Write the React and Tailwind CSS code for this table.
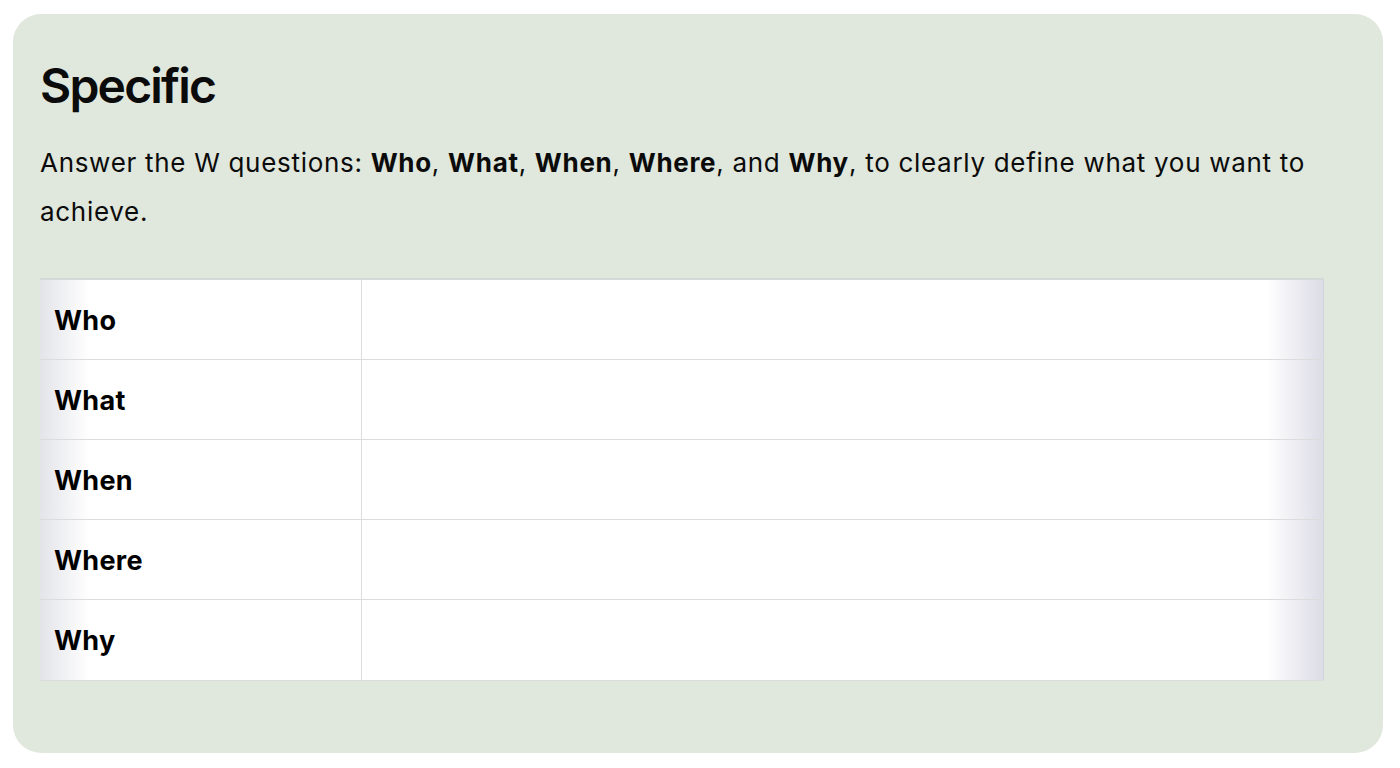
export default function App() {
  const rows = ["Who", "What", "When", "Where", "Why"];
  return (
    <div className="min-h-[768px] w-[1400px] bg-white pl-[13px] pt-[14px]" style={{ fontFamily: 'Inter, "Liberation Sans", Arial, sans-serif' }}>
      <div className="w-[1370px] h-[739px] rounded-[28px] bg-[#e0e7dc] pl-[27px] pr-[59px] pt-[42px] text-[#0b0b0b]">
        <h1 className="text-[48px] leading-[60px] font-semibold tracking-[-1.8px]">Specific</h1>
        <p className="mt-[22px] text-[26px] leading-[49px] tracking-[0.7px]">
          Answer the W questions: <b>Who</b>, <b>What</b>, <b>When</b>, <b>Where</b>, and <b>Why</b>, to clearly define what you want to achieve.
        </p>
        <div className="mt-[42px] border-t-2 border-b border-r border-t-[#d4d8d6] border-b-[#dcdcdc] border-r-[#d6d6e2] bg-[linear-gradient(to_right,#e3e4e9_0px,#ffffff_50px,#ffffff_calc(100%_-_56px),#dcdce6_100%)]">
          {rows.map((r, i) => (
            <div key={r} className={"flex h-[80px] " + (i < rows.length - 1 ? "border-b border-[#dcdcdc]" : "")}>
              <div className="w-[322px] flex items-center pl-[14px] pt-[3px] border-r border-[#dcdcdc] text-[27px] tracking-[0.3px] font-bold text-black">{r}</div>
              <div className="flex-1" />
            </div>
          ))}
        </div>
      </div>
    </div>
  );
}
